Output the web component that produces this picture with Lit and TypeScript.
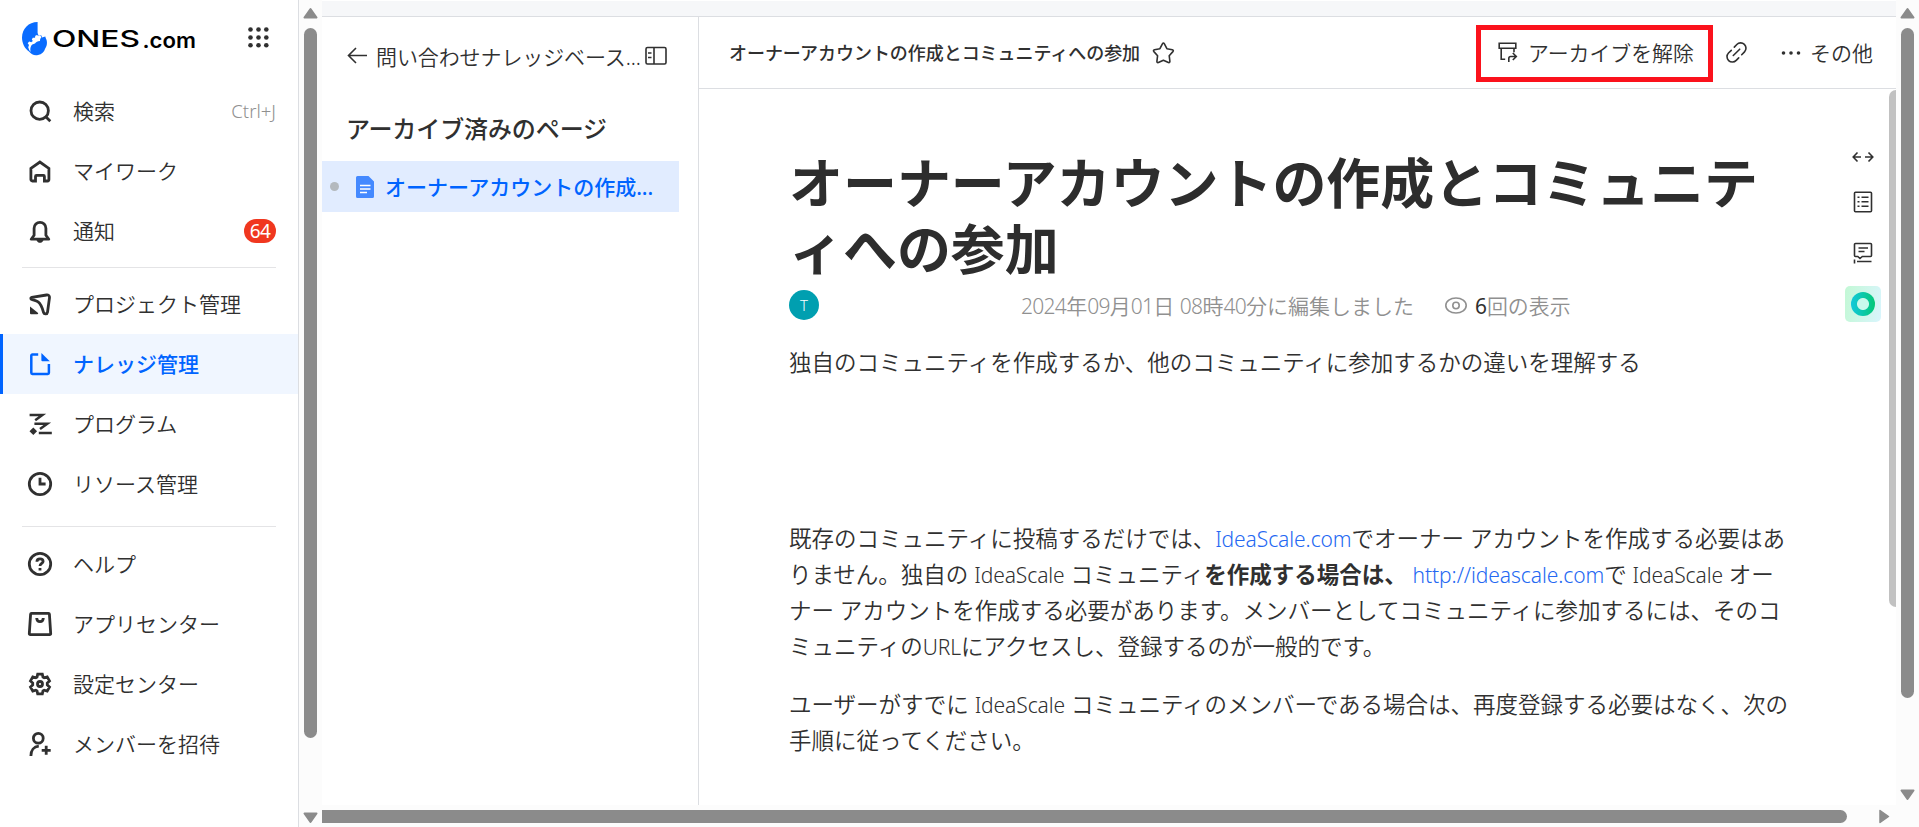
import { LitElement, html, css, svg, TemplateResult } from 'lit';
import { customElement, property } from 'lit/decorators.js';
import { classMap } from 'lit/directives/class-map.js';

const icons: Record<string, TemplateResult> = {
  search: svg`<circle cx="11.7" cy="11.7" r="8.7"/><path d="M17.8 17.8L22.3 22.2"/>`,
  home: svg`<path d="M2.9 9.4L11.9 3l9 6.4v11.2a1.4 1.4 0 0 1-1.4 1.4h-3.100v-4.600a1 1 0 0 0-1-1H8.500a1 1 0 0 0-1 1V22H4.300a1.400 1.400 0 0 1-1.400-1.400z"/>`,
  bell: svg`<path d="M3.200 20.200h17.600l-2.900-4V9.200a5.900 5.900 0 0 0-11.800 0v7z" stroke-linejoin="round"/><path d="M8.500 21h7c-.5 1.900-1.900 2.800-3.500 2.800s-3-.9-3.500-2.800z" fill="currentColor" stroke="none"/>`,
  project: svg`<path d="M3.300 7.200c-.8-.5-.6-1.700.4-1.900l14.800-2.300c1.900-.2 3.200.8 3 2.600l-2 14.600c-.3 2-3.300 2.300-3.900.3-1.300-4.500-2.300-8.500-5.500-10.700-2-1.300-4.300-1.600-6.800-2.600z"/><path d="M2 14.500l7.800 6.300c.7.600.3 1.500-.5 1.500H3a1 1 0 0 1-1-1z" fill="currentColor" stroke="none"/>`,
  file: svg`<path d="M10.200 2.600H4.400a1.100 1.100 0 0 0-1.100 1.100v17.100a1.100 1.100 0 0 0 1.100 1.100h15.400a1.100 1.100 0 0 0 1.100-1.100v-8.900" stroke-width="2.500"/><path d="M13.400.9l8.400 8.400h-7.400a1 1 0 0 1-1-1z" fill="currentColor" stroke="none"/>`,
  program: svg`<path d="M1.600 3h12.800L7.200 8.300M6.400 11.700h12.900L12 17M10.800 21h13" stroke-width="2.500"/><path d="M5.300 15.500l3.800 3.800-3.800 3.800-3.800-3.800z" fill="currentColor" stroke="none"/>`,
  clock: svg`<circle cx="12" cy="12" r="10.700"/><path d="M12 5.700V12h5.600"/>`,
  help: svg`<circle cx="12" cy="12" r="10.700"/><path d="M8.900 9.700c0-1.800 1.300-2.900 3.100-2.900s3.100 1 3.100 2.600c0 2-3.100 2.100-3.100 4.700"/><path d="M12 16v2.500"/>`,
  app: svg`<path d="M3.500 1.400h17a.9.900 0 0 1 .9.800l1.300 19.400a1 1 0 0 1-1 1.100H2.300a1 1 0 0 1-1-1.100L2.600 2.200a.9.900 0 0 1 .9-.8z"/><path d="M8.700 6c.2 4.800 6.400 4.800 6.600 0"/>`,
  gear: svg`<path d="M9.700 2.100h4.600l.7 3 1.200.7 3-.9 2.300 4-2.200 2.100v2l2.200 2.100-2.300 4-3-.9-1.200.7-.7 3H9.700l-.7-3-1.200-.7-3 .9-2.300-4L4.700 13v-2L2.500 8.900l2.300-4 3 .9 1.200-.7z"/><circle cx="12" cy="12" r="2.500"/>`,
  invite: svg`<circle cx="10.300" cy="6.200" r="4.900"/><path d="M2.900 23.900c0-5.600 3-9.300 7.900-9.700M18.200 13.800v9M13.700 18.300h9"/>`,
};

interface NavEntry {
  icon: string;
  label: string;
  hint?: string;
  badge?: number;
  active?: boolean;
}

const groups: NavEntry[][] = [
  [
    { icon: 'search', label: '検索', hint: 'Ctrl+J' },
    { icon: 'home', label: 'マイワーク' },
    { icon: 'bell', label: '通知', badge: 64 },
  ],
  [
    { icon: 'project', label: 'プロジェクト管理' },
    { icon: 'file', label: 'ナレッジ管理', active: true },
    { icon: 'program', label: 'プログラム' },
    { icon: 'clock', label: 'リソース管理' },
  ],
  [
    { icon: 'help', label: 'ヘルプ' },
    { icon: 'app', label: 'アプリセンター' },
    { icon: 'gear', label: '設定センター' },
    { icon: 'invite', label: 'メンバーを招待' },
  ],
];

@customElement('side-nav')
export class SideNav extends LitElement {
  static styles = css`
    :host { display: block; box-sizing: border-box; width: 299px; flex: none; background: #fff; border-right: 1px solid #dcdee2; }
    .brand { display: flex; align-items: flex-start; justify-content: space-between; height: 81px; box-sizing: border-box; padding: 20px 28px 0 20px; }
    .logo { display: block; }
    .dots { display: block; margin-top: 7px; }
    .item { display: flex; align-items: center; height: 60px; box-sizing: border-box; padding: 0 22px 0 28px; color: #303030; font-size: 21px; line-height: 30px; white-space: nowrap; }
    .item.active { color: #0064ff; background: #f0f6ff; box-shadow: inset 3px 0 #0064ff; font-weight: 500; }
    .icon { width: 24px; height: 24px; overflow: visible; margin-right: 21px; fill: none; stroke: currentColor; stroke-width: 2.800; flex: none; }
    .label { flex: 1; }
    .hint { color: #909090; font-size: 18.500px; }
    .badge { width: 32px; height: 24px; border-radius: 12px; background: #f0371f; color: #fff; font-size: 19px; line-height: 24px; text-align: center; letter-spacing: -.5px; font-weight: 400; }
    .rule { height: 1px; margin: 6px 22px; background: #e4e4e6; }
    .rule.wide { margin: 12px 22px 7px; }
  `;
  render() {
    return html`
      <div class="brand">
        <svg class="logo" width="180" height="36" viewBox="20 20 180 36">
          <path fill="#0a6cff" d="M37.600 22v11l1.200 3.200 1.300-1.200 1.300.5.600 1.900 3.300-.8.400 1.400C47.800 41.500 47 46 45.200 48.500A9.200 9.200 0 0 1 29 51.500C24.500 48.500 22 43 22 37.500 22.300 28.500 28.500 22 37.600 22z"/>
          <path fill="#fff" d="M40.500 35.200l-2.200.7-1.300-1-1.700.9-.3 2-2.200-.1-1 1.700 1 1.500-1.600 1.300-2-.7-1.500 1.800 1.300 1.600-.8 2.300 1 2.800 1.300 2-.2-3c.1-1.800.9-3.500 2-4.500l2.700-1c1.200-1.800 2.400-2.500 5-2.600l.2-2.100 1.100-1z"/>
          <text x="52" y="47.300" textLength="88" lengthAdjust="spacingAndGlyphs" font-family="Inter" font-weight="500" font-size="22.800">ONES</text>
          <text x="142.500" y="47.500" textLength="53.500" lengthAdjust="spacingAndGlyphs" font-family="Inter" font-weight="600" font-size="20.700">.com</text>
        </svg>
        <svg class="dots" width="22" height="22" fill="#303030">
          ${[2.5, 10.5, 18.3].map((y) => [2.5, 10.5, 18.3].map((x) => svg`<circle cx=${x} cy=${y} r="2.300"/>`))}
        </svg>
      </div>
      ${groups.map((group, i) => html`
        ${i ? html`<div class=${classMap({ rule: true, wide: i === 2 })}></div>` : ''}
        ${group.map((n) => html`
          <div class=${classMap({ item: true, active: !!n.active })}>
            <svg class="icon" viewBox="0 0 24 24">${icons[n.icon]}</svg>
            <span class="label">${n.label}</span>
            ${n.hint ? html`<span class="hint">${n.hint}</span>` : ''}
            ${n.badge ? html`<span class="badge">${n.badge}</span>` : ''}
          </div>`)}
      `)}
    `;
  }
}

@customElement('scroll-rail')
export class ScrollRail extends LitElement {
  @property({ type: Number }) thumb = 710;
  static styles = css`
    :host { display: flex; flex-direction: column; align-items: center; width: 23px; flex: none; background: #fcfcfc; box-sizing: border-box; padding-top: 7px; }
    .arrow { fill: #8b8b8b; stroke: #8b8b8b; stroke-width: 2; stroke-linejoin: round; flex: none; }
    .thumb { width: 13px; border-radius: 7px; background: #8b8b8b; margin-top: 9px; }
    .gap { flex: 1; }
  `;
  render() {
    return html`
      <svg class="arrow" width="15" height="12"><path d="M7.500 2L13.500 10.500H1.500z"/></svg>
      <div class="thumb" style="height:${this.thumb}px"></div>
      <div class="gap"></div>
      <svg class="arrow" width="15" height="12"><path d="M1.500 1.500H13.500L7.500 10z"/></svg>
    `;
  }
}

@customElement('page-tree')
export class PageTree extends LitElement {
  static styles = css`
    :host { display: block; box-sizing: border-box; width: 377px; flex: none; border-right: 1px solid #dcdee2; color: #303030; }
    .back { display: flex; align-items: center; height: 78px; padding: 0 30px 0 25px; font-size: 21px; white-space: nowrap; }
    .back svg { flex: none; }
    .back span { padding-left: 9px; width: 269px; letter-spacing: -.1px; }
    h2 { margin: 0; padding: 13px 0 0 24px; height: 66px; box-sizing: border-box; font-size: 24px; line-height: 42px; font-weight: 500; letter-spacing: -.1px; }
    .node { display: flex; align-items: center; width: 357px; height: 51px; background: #e1ecff; color: #0064ff; font-size: 21px; font-weight: 500; white-space: nowrap; }
    .dot { width: 9px; height: 9px; border-radius: 50%; background: #b4b9be; margin: 0 17px 0 8px; }
    .node span { margin: -2px 0 0 11px; }
  `;
  render() {
    return html`
      <div class="back">
        <svg width="20" height="20" fill="none" stroke="#303030" stroke-width="1.600"><path d="M20 9.500H1.500M9 2L1.500 9.500 9 17"/></svg>
        <span>問い合わせナレッジベース...</span>
        <svg width="22" height="20" fill="none" stroke="#303030" stroke-width="1.600"><rect x="1" y="1.500" width="20" height="16.500" rx="1.500"/><path d="M9 1.500v16.500M3 7h3.500M3 11.500h3.500"/></svg>
      </div>
      <h2>アーカイブ済みのページ</h2>
      <div class="node">
        <i class="dot"></i>
        <svg width="18" height="22"><path fill="#4489ff" d="M1.500 0h11L18 5.500v15a1.500 1.500 0 0 1-1.500 1.500h-15A1.500 1.500 0 0 1 0 20.500v-19A1.500 1.500 0 0 1 1.500 0z"/><path stroke="#fff" stroke-width="1.500" d="M4 9.500h10.500M4 13h10.500M4 16.500h7"/></svg>
        <span>オーナーアカウントの作成...</span>
      </div>
    `;
  }
}

@customElement('page-view')
export class PageView extends LitElement {
  static styles = css`
    :host { display: flex; flex-direction: column; flex: 1; min-width: 0; color: #303030; }
    .top { display: flex; align-items: center; height: 71px; border-bottom: 1px solid #dcdee2; padding-left: 30px; font-size: 21px; white-space: nowrap; }
    .name { font-size: 18px; font-weight: 500; margin-top: -1px; letter-spacing: -.05px; }
    .star { margin-left: 12px; }
    .grow { flex: 1; }
    .restore { display: flex; align-items: center; box-sizing: border-box; width: 237px; height: 57px; margin-top: 2px; border: 5px solid #fb121c; padding-left: 17px; font-size: 20.900px; }
    .restore span { margin: -4px 0 0 10px; }
    .restore svg { margin-top: -2px; }
    .link { margin: 0 34px 0 13px; }
    .more { margin-right: 9px; }
    .end { margin: -2px 23px 0 0; }
    svg { flex: none; display: block; }
    .line { fill: none; stroke: #303030; stroke-width: 1.600; }
    .body { display: flex; flex: 1; min-height: 0; }
    article { width: 1010px; padding: 61px 0 0 90px; flex: none; }
    h1 { margin: 0; font-size: 54px; line-height: 66px; font-weight: 700; white-space: nowrap; color: #2d2d2d; letter-spacing: -.05px; }
    .meta { display: flex; align-items: center; height: 30px; margin-top: 8px; font-size: 21px; color: #909090; white-space: nowrap; }
    .avatar { width: 30px; height: 30px; border-radius: 50%; background: #009fb0; color: #fff; font-size: 15px; line-height: 30px; text-align: center; margin-right: 202px; }
    .eye { margin: 0 8px 0 31px; }
    .line.eye { stroke: #909090; }
    .views { font-size: 20.900px; }
    .views b { font-weight: 400; color: #303030; }
    .num { letter-spacing: -.7px; }
    .latin { font-size: 21px; letter-spacing: -.08px; }
    p { margin: 0; font-size: 22.500px; line-height: 36px; white-space: nowrap; }
    .lead { margin: 25px 0 140px; }
    .next { margin-top: 22px; }
    a { color: #2468f2; text-decoration: none; }
    .tools { display: flex; flex-direction: column; align-items: center; flex: 1; padding: 57px 0 0 38px; }
    .t2 { margin-top: 23px; }
    .t3 { margin-top: 29px; }
    .bot { margin-top: 22px; width: 36px; height: 36px; border-radius: 5px; background: linear-gradient(100deg, #c3f8d5, #d9f5fd); display: grid; place-items: center; }
    .ring { width: 24px; height: 24px; border-radius: 50%; background: radial-gradient(circle, #c9f9ec 5.500px, transparent 6.500px), linear-gradient(90deg, #12c8dc, #04c877); }
    .bar { width: 7px; height: 517px; margin-top: 1px; border-radius: 7px 0 0 7px; background: #c1c1c1; flex: none; }
  `;
  render() {
    const n = (t: string) => html`<span class="num">${t}</span>`;
    const l = (t: string) => html`<span class="latin">${t}</span>`;
    return html`
      <div class="top">
        <span class="name">オーナーアカウントの作成とコミュニティへの参加</span>
        <svg class="line star" width="23" height="22"><path stroke-linejoin="round" d="M10.400 1.800q1-1.600 2 0l2.500 4.900 5.400 1.100q1.700.5.600 1.800l-3.700 4.100.7 5.600q0 1.700-1.500 1.200l-5-2.300-5 2.300q-1.600.5-1.500-1.200l.7-5.600-3.700-4.100q-1.100-1.300.6-1.800l5.400-1.100z"/></svg>
        <i class="grow"></i>
        <div class="restore">
          <svg class="line" width="20" height="21"><path d="M1.200 1.300h16.600v5H1.200zM3.200 6.300v11h4M16 6.300v4M10.800 20v-3.500q0-2 2-2H18M14.800 11l3.500 3.500-3.500 3.500"/></svg>
          <span>アーカイブを解除</span>
        </div>
        <svg class="line link" width="21" height="21"><path stroke-linecap="round" d="M8.300 5.100l2.500-2.600a5.200 5.200 0 0 1 7.700 7.400l-2.800 2.800M12.700 15.900l-2.500 2.500a5.200 5.200 0 0 1-7.700-7.400l2.800-2.700M7.300 13.500l6.400-6.300"/></svg>
        <svg class="more" width="20" height="6" fill="#303030"><circle cx="2.500" cy="3" r="1.800"/><circle cx="10" cy="3" r="1.800"/><circle cx="17.500" cy="3" r="1.800"/></svg>
        <span class="end">その他</span>
      </div>
      <div class="body">
        <article>
          <h1>オーナーアカウントの作成とコミュニテ<br>ィへの参加</h1>
          <div class="meta">
            <div class="avatar">T</div>
            <span class="date">${n('2024')}年${n('09')}月${n('01')}日 ${n('08')}時${n('40')}分に編集しました</span>
            <svg class="line eye" width="22" height="17"><ellipse cx="11" cy="8.500" rx="10.200" ry="7.500"/><circle cx="11" cy="8.500" r="3.200"/></svg>
            <span class="views"><b>6</b>回の表示</span>
          </div>
          <p class="lead">独自のコミュニティを作成するか、他のコミュニティに参加するかの違いを理解する</p>
          <p>既存のコミュニティに投稿するだけでは、<a>${l('IdeaScale.com')}</a>でオーナー アカウントを作成する必要はあ<br>りません。独自の ${l('IdeaScale')} コミュニティ<strong>を作成する場合は、</strong> <a>${l('http://ideascale.com')}</a>で ${l('IdeaScale')} オー<br>ナー アカウントを作成する必要があります。メンバーとしてコミュニティに参加するには、そのコ<br>ミュニティの${l('URL')}にアクセスし、登録するのが一般的です。</p>
          <p class="next">ユーザーがすでに ${l('IdeaScale')} コミュニティのメンバーである場合は、再度登録する必要はなく、次の<br>手順に従ってください。</p>
        </article>
        <div class="tools">
          <svg class="line" width="22" height="22" viewBox="0 0 22 22"><path d="M9 11H1.500M5.500 6.500L1.200 11l4.300 4.500M13 11h7.500M16.500 6.500l4.300 4.500-4.300 4.500"/></svg>
          <svg class="line t2" width="20" height="22"><rect x="1.500" y="1.200" width="17" height="19.600" rx="1"/><path d="M4.500 6.200h2M8.500 6.200h7M4.500 10.700h2M8.500 10.700h7M4.500 15.200h2M8.500 15.200h7"/></svg>
          <svg class="line t3" width="20" height="22"><path d="M2.500 1.500h15a1 1 0 0 1 1 1v11a1 1 0 0 1-1 1H9.300L7 16.500 4.800 14.500H2.500a1 1 0 0 1-1-1v-11a1 1 0 0 1 1-1zM5.500 6h9.500M5.500 9.500h6M1.500 17.500v4M4 19.500h14.500"/></svg>
          <div class="bot"><i class="ring"></i></div>
        </div>
        <div class="bar"></div>
      </div>
    `;
  }
}

@customElement('app-root')
export class AppRoot extends LitElement {
  static styles = css`
    :host { display: flex; width: 100%; height: 827px; overflow: hidden; background: #fff; font-family: "Noto Sans", "Noto Sans CJK JP", sans-serif; font-weight: 350; }
    .frame { display: flex; flex-direction: column; flex: 1; min-width: 0; }
    .upper { display: flex; flex: 1; min-height: 0; }
    .work { display: flex; flex-direction: column; flex: 1; min-width: 0; background: #fff; }
    .strip { height: 16px; background: linear-gradient(#fff 1px, #f6f7f9 1px); border-bottom: 1px solid #dcdee2; }
    .panes { display: flex; flex: 1; min-height: 0; }
    .hbar { display: flex; align-items: center; height: 22px; background: #fcfcfc; }
    .hthumb { width: 1525px; height: 13px; border-radius: 0 7px 7px 0; background: #8b8b8b; }
    .right { margin-left: 32px; fill: #8b8b8b; stroke: #8b8b8b; stroke-width: 1.500; stroke-linejoin: round; }
    .outer { padding-bottom: 4px; }
    .left { padding-bottom: 3px; }
  `;
  render() {
    return html`
      <side-nav></side-nav>
      <scroll-rail class="left" .thumb=${710}></scroll-rail>
      <div class="frame">
        <div class="upper">
          <div class="work">
            <div class="strip"></div>
            <div class="panes">
              <page-tree></page-tree>
              <page-view></page-view>
            </div>
          </div>
          <scroll-rail class="outer" .thumb=${670}></scroll-rail>
        </div>
        <div class="hbar">
          <div class="hthumb"></div>
          <svg class="right" width="11" height="15"><path d="M1 1.500v12l8.500-6z"/></svg>
        </div>
      </div>
    `;
  }
}
